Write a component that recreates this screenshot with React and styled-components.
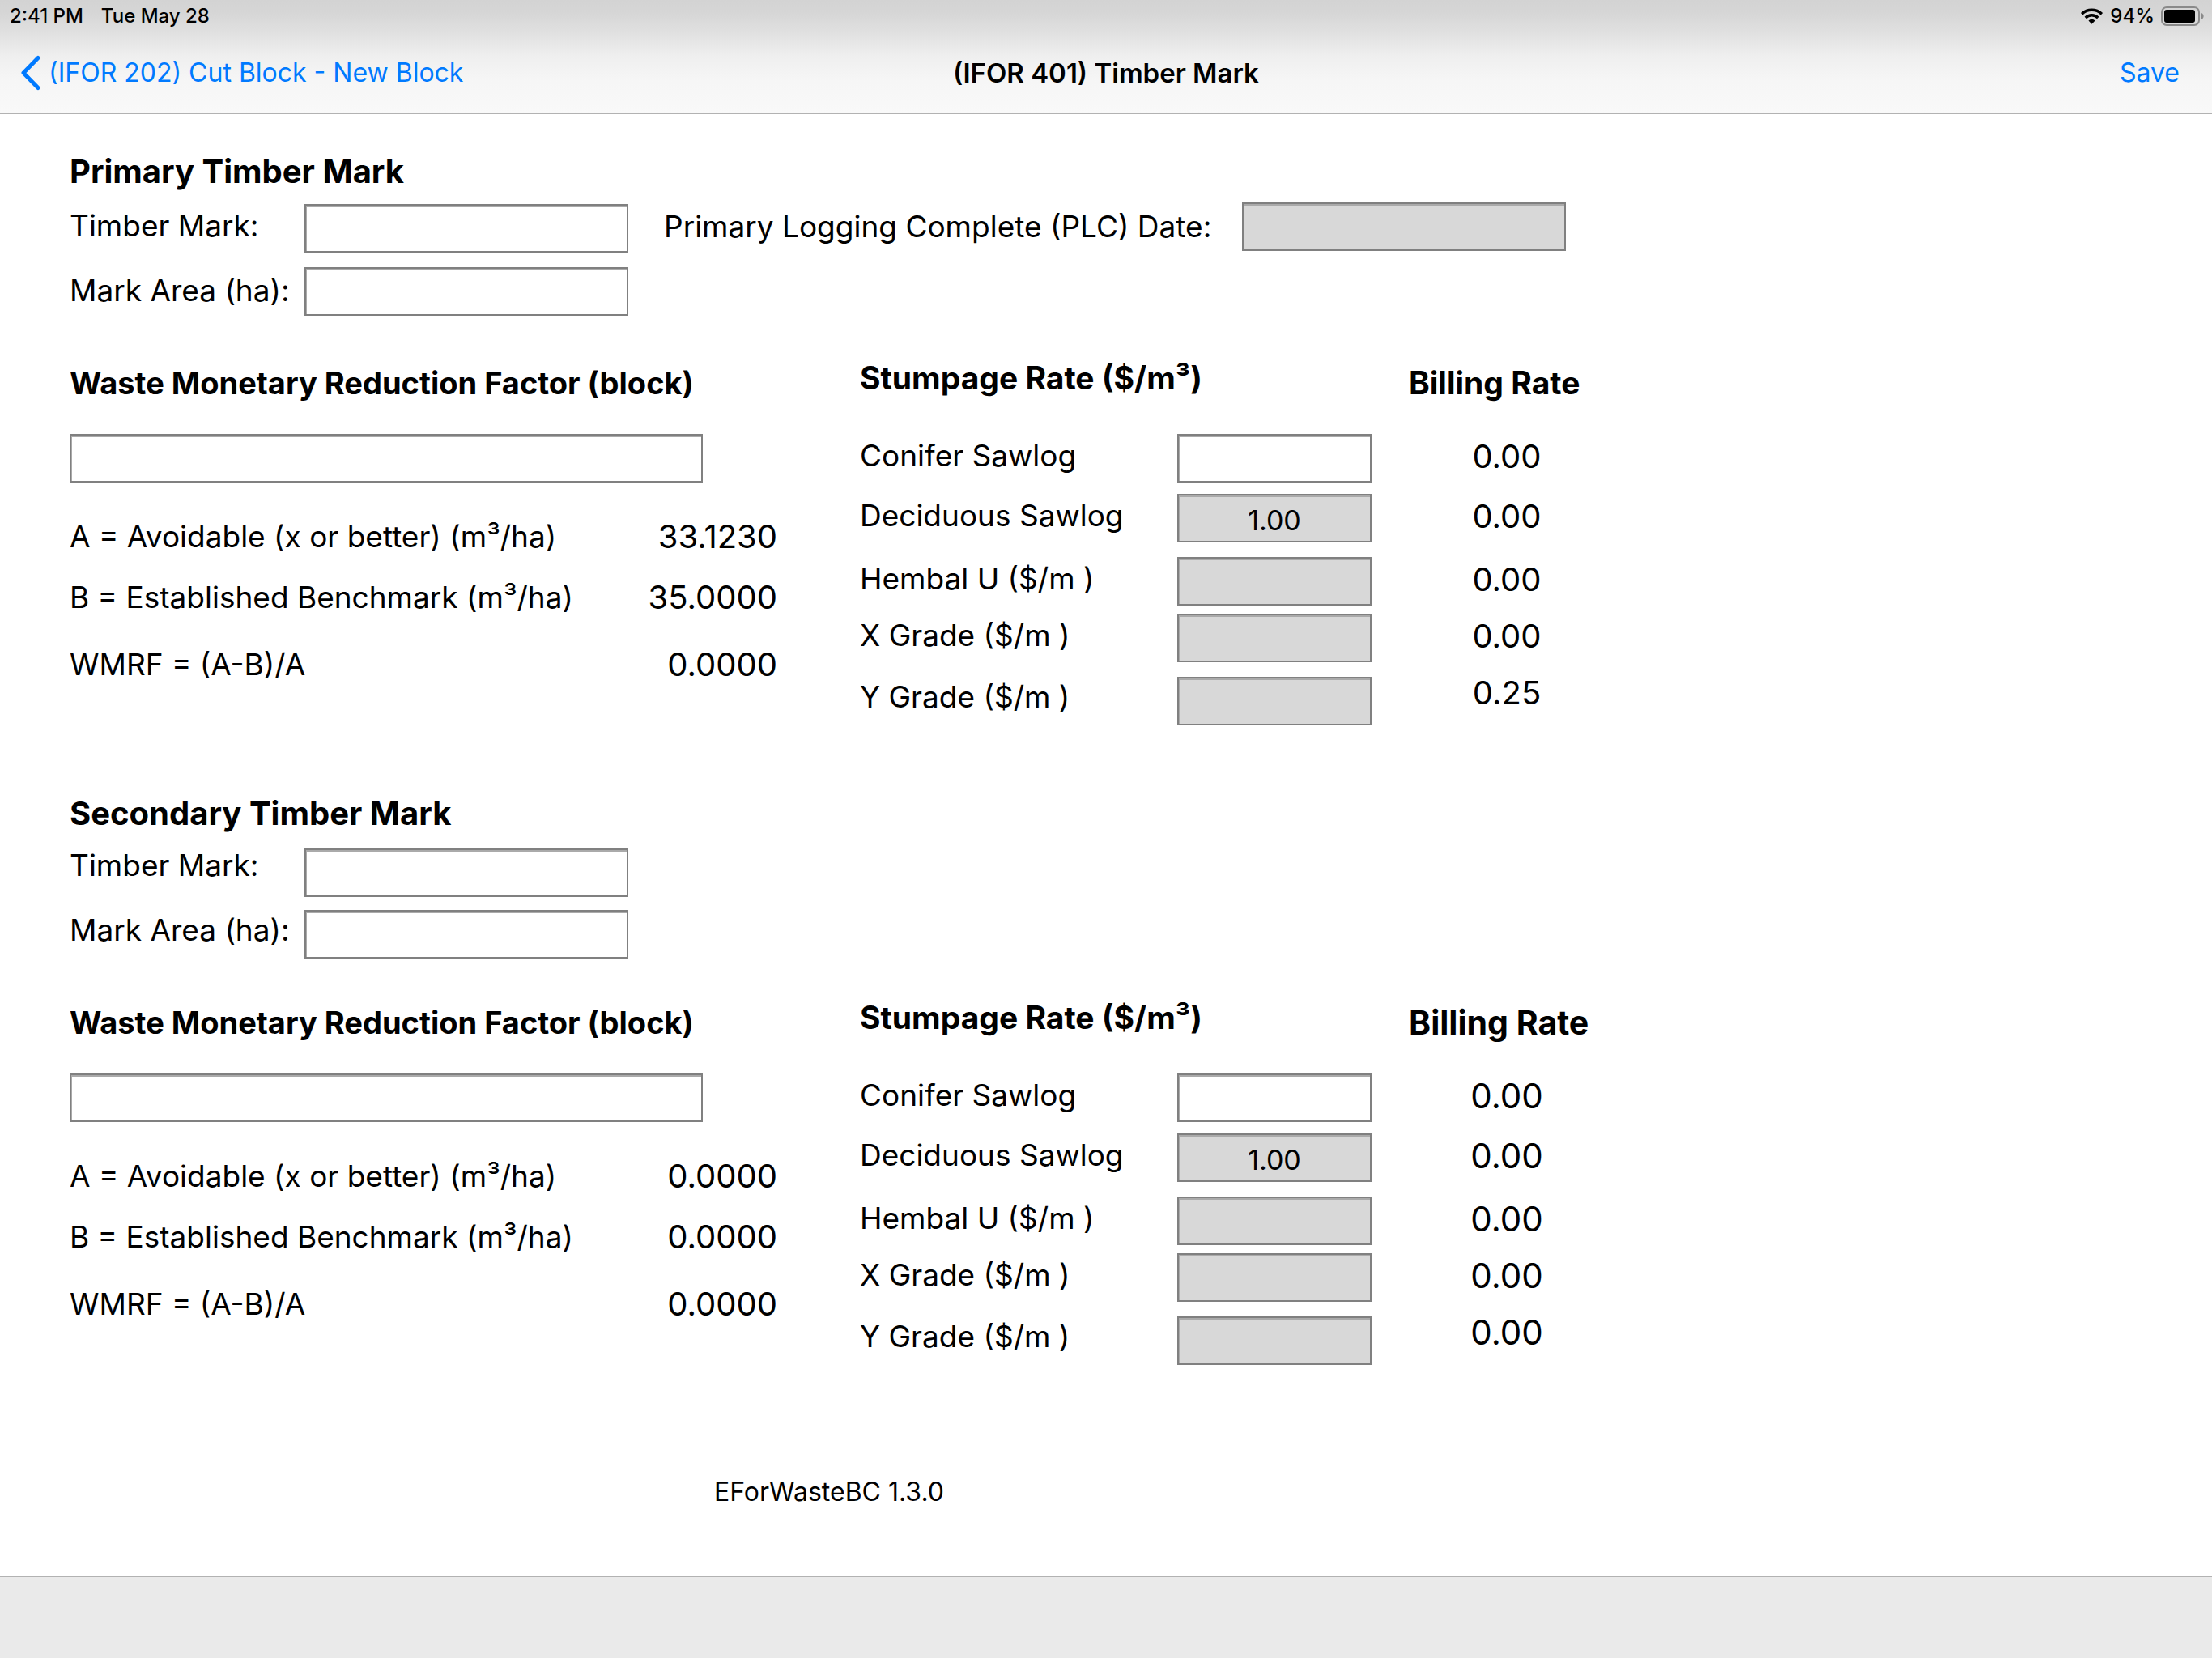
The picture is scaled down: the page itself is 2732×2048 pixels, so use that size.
import React from "react";
import styled, { createGlobalStyle } from "styled-components";

const GlobalStyle = createGlobalStyle`
  *, *::before, *::after { box-sizing: border-box; }
  body {
    margin: 0;
    background: #fff;
    color: #000;
    font-family: Inter, "Noto Sans", sans-serif;
    font-size: 37px;
    line-height: 48px;
  }
`;

const Screen = styled.div`
  display: flex;
  flex-direction: column;
  min-height: 100vh;
`;

const Header = styled.header`
  border-bottom: 1px solid #b2b2b2;
  background: linear-gradient(#d3d3d3 0, #d6d6d6 16px, #e2e2e2 44px, #efefef 70px, #f6f6f6 100px, #f9f9f9 140px);
`;

const StatusBar = styled.div`
  display: flex;
  align-items: center;
  justify-content: space-between;
  height: 40px;
  padding: 0 10px 0 12px;
  font-size: 24px;
  font-weight: 500;
  line-height: 32px;
`;

const StatusGroup = styled.div`
  display: flex;
  align-items: center;
  gap: ${(p) => p.$gap}px;
`;

const NavBar = styled.nav`
  display: grid;
  grid-template-columns: 1fr auto 1fr;
  align-items: center;
  height: 100px;
  font-size: 32px;
`;

const NavTitle = styled.h1`
  margin: 0;
  font-size: 33px;
  font-weight: 600;
`;

const NavButton = styled.button`
  display: inline-flex;
  align-items: center;
  justify-self: ${(p) => p.$side};
  gap: 10px;
  padding: 0 40px 0 24px;
  border: 0;
  background: none;
  color: #007aff;
  font: inherit;
  cursor: pointer;
`;

const Main = styled.main`
  flex: 1;
  padding: 47px 86px 0;
`;

const Section = styled.section`
  margin-bottom: ${(p) => p.$after}px;
`;

const SectionTitle = styled.h2`
  margin: 0 0 14px;
  font-size: 40px;
  font-weight: 700;
`;

const Marks = styled.div`
  display: flex;
  flex-wrap: wrap;
  margin-bottom: 28px;
`;

const MarkLabels = styled.div`
  display: grid;
  grid-auto-rows: 80px;
  width: 290px;
  padding-top: ${(p) => p.$top}px;
`;

const MarkFields = styled.div`
  display: flex;
  flex-direction: column;
  gap: ${(p) => p.$gap}px;
  width: 444px;
  padding-top: ${(p) => p.$top}px;
`;

const DateField = styled.div`
  display: grid;
  grid-template-columns: 714px 400px;
  align-items: center;
  height: 60px;
`;

const Field = styled.input`
  display: block;
  width: ${(p) => p.$width}px;
  height: 60px;
  padding: 4px 8px 0;
  border: 2px solid #808080;
  border-radius: 0;
  outline: 0;
  background: #fff;
  box-shadow: inset 1px 2px 0 #aaa;
  color: #000;
  font: inherit;
  font-size: 34px;
  text-align: center;
  opacity: 1;

  &:disabled { background: #d8d8d8; }
`;

const Rates = styled.div`
  display: flex;
  flex-wrap: wrap;
`;

const RateColumn = styled.div`
  width: ${(p) => p.$width}px;
  margin-right: ${(p) => p.$after}px;
`;

const ColumnTitle = styled.h3`
  height: 93px;
  margin: 0;
  padding-top: ${(p) => p.$top}px;
  font-size: ${(p) => p.$size}px;
  font-weight: 700;
  white-space: nowrap;
`;

const Factors = styled.dl`
  display: grid;
  grid-template: 75px 83px 48px / 1fr auto;
  margin: 43px 0 0;
`;

const FactorValue = styled.dd`
  margin: 0;
  font-size: 40px;
  text-align: right;
`;

const Stumpage = styled.div`
  display: grid;
  grid-template-columns: 392px 240px;
`;

const StumpageLabels = styled.div`
  display: grid;
  grid-template-rows: 74px 78px 70px 76px 48px;
  padding-top: 3px;
`;

const StumpageFields = styled.div`
  display: grid;
  grid-template-rows: 74px 78px 70px 78px 60px;
`;

const BillingValues = styled.div`
  display: grid;
  grid-template-rows: 74px 78px 70px 70px 48px;
  padding-top: 4px;
  font-size: ${(p) => p.$size}px;
  text-align: center;
`;

const Version = styled.p`
  max-width: 1876px;
  margin: 0;
  font-size: 32px;
  text-align: center;
`;

const Toolbar = styled.footer`
  height: 101px;
  border-top: 1px solid #b2b2b2;
  background: #eaeaea;
`;

const Chevron = () => (
  <svg width="26" height="44" viewBox="0 0 26 44" fill="none" stroke="currentColor" strokeWidth="5" strokeLinecap="round" strokeLinejoin="round" aria-hidden="true">
    <path d="M23 3.5 5 22l18 18.500" />
  </svg>
);

const Wifi = () => (
  <svg width="29" height="22" viewBox="0 0 30 22" fill="none" stroke="#000" strokeWidth="3.600" aria-hidden="true">
    <path d="M2.200 8.200a18.500 18.500 0 0 1 25.600 0" />
    <path d="M7 13a11.500 11.500 0 0 1 16 0" />
    <path d="M15 21l-4.200-4.300a6 6 0 0 1 8.400 0z" fill="#000" stroke="none" />
  </svg>
);

const Battery = () => (
  <svg width="53" height="24" viewBox="0 0 53 24" aria-hidden="true">
    <rect x="1" y="1" width="46" height="22" rx="6" fill="none" stroke="#8a8a8a" strokeWidth="2" />
    <rect x="4" y="4" width="38" height="16" rx="3" fill="#000" />
    <path d="M50 8c3.500 1.500 3.500 6.500 0 8z" fill="#8a8a8a" />
  </svg>
);

const stumpageRows = [
  { name: "Conifer Sawlog", value: "", editable: true },
  { name: "Deciduous Sawlog", value: "1.00" },
  { name: "Hembal U ($/m )", value: "" },
  { name: "X Grade ($/m )", value: "" },
  { name: "Y Grade ($/m )", value: "" },
];

const factorNames = [
  "A = Avoidable (x or better) (m³/ha)",
  "B = Established Benchmark (m³/ha)",
  "WMRF = (A-B)/A",
];

function TimberMark({ id, title, hasDate, labelTop, fieldTop, fieldGap, factors, billing, billingTitleSize, billingSize, after }) {
  return (
    <Section $after={after}>
      <SectionTitle>{title}</SectionTitle>
      <Marks>
        <MarkLabels $top={labelTop}>
          <label htmlFor={`${id}-mark`}>Timber Mark:</label>
          <label htmlFor={`${id}-area`}>Mark Area (ha):</label>
        </MarkLabels>
        <MarkFields $top={fieldTop} $gap={fieldGap}>
          <Field id={`${id}-mark`} type="text" $width={400} />
          <Field id={`${id}-area`} type="text" $width={400} />
        </MarkFields>
        {hasDate && (
          <DateField>
            <label htmlFor={`${id}-date`}>Primary Logging Complete (PLC) Date:</label>
            <Field id={`${id}-date`} type="text" $width={400} disabled />
          </DateField>
        )}
      </Marks>
      <Rates>
        <RateColumn $width={874} $after={102}>
          <ColumnTitle $top={6} $size={38}>
            <label htmlFor={`${id}-factor`}>Waste Monetary Reduction Factor (block)</label>
          </ColumnTitle>
          <Field id={`${id}-factor`} type="text" $width={782} />
          <Factors>
            {factorNames.map((name, i) => (
              <React.Fragment key={name}>
                <dt>{name}</dt>
                <FactorValue>{factors[i]}</FactorValue>
              </React.Fragment>
            ))}
          </Factors>
        </RateColumn>
        <RateColumn $width={632} $after={46}>
          <ColumnTitle $top={0} $size={39}>Stumpage Rate ($/m³)</ColumnTitle>
          <Stumpage>
            <StumpageLabels>
              {stumpageRows.map((row, i) => (
                <label key={row.name} htmlFor={`${id}-rate-${i}`}>{row.name}</label>
              ))}
            </StumpageLabels>
            <StumpageFields>
              {stumpageRows.map((row, i) => (
                <Field key={row.name} id={`${id}-rate-${i}`} type="text" defaultValue={row.value} $width={240} disabled={!row.editable} />
              ))}
            </StumpageFields>
          </Stumpage>
        </RateColumn>
        <RateColumn $width={242} $after={0}>
          <ColumnTitle $top={6} $size={billingTitleSize}>Billing Rate</ColumnTitle>
          <BillingValues $size={billingSize}>
            {billing.map((value, i) => (
              <span key={i}>{value}</span>
            ))}
          </BillingValues>
        </RateColumn>
      </Rates>
    </Section>
  );
}

export default function App() {
  return (
    <Screen>
      <GlobalStyle />
      <Header>
        <StatusBar>
          <StatusGroup $gap={22}>
            <span>2:41 PM</span>
            <span>Tue May 28</span>
          </StatusGroup>
          <StatusGroup $gap={8}>
            <Wifi />
            <span>94%</span>
            <Battery />
          </StatusGroup>
        </StatusBar>
        <NavBar>
          <NavButton type="button" $side="start">
            <Chevron />
            (IFOR 202) Cut Block - New Block
          </NavButton>
          <NavTitle>(IFOR 401) Timber Mark</NavTitle>
          <NavButton type="button" $side="end">Save</NavButton>
        </NavBar>
      </Header>
      <Main>
        <TimberMark
          id="primary"
          title="Primary Timber Mark"
          hasDate
          labelTop={5}
          fieldTop={2}
          fieldGap={18}
          factors={["33.1230", "35.0000", "0.0000"]}
          billing={["0.00", "0.00", "0.00", "0.00", "0.25"]}
          billingTitleSize={39}
          billingSize={40}
          after={85}
        />
        <TimberMark
          id="secondary"
          title="Secondary Timber Mark"
          labelTop={2}
          fieldTop={5}
          fieldGap={16}
          factors={["0.0000", "0.0000", "0.0000"]}
          billing={["0.00", "0.00", "0.00", "0.00", "0.00"]}
          billingTitleSize={41}
          billingSize={42}
          after={133}
        />
        <Version>EForWasteBC 1.3.0</Version>
      </Main>
      <Toolbar />
    </Screen>
  );
}
